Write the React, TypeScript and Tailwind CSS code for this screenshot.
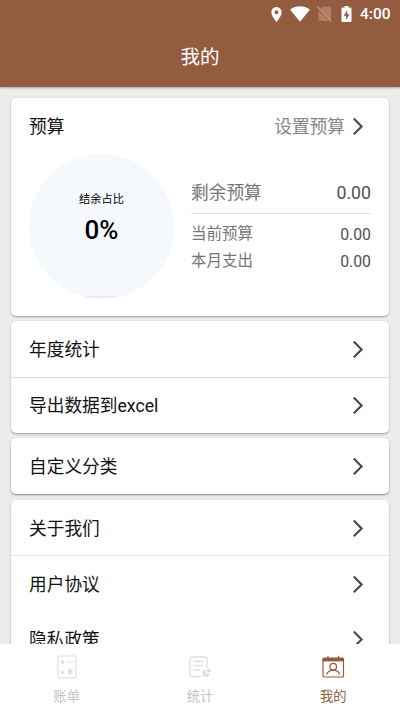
const Chevron = () => {
  return (
    <svg className="w-3 h-[18px] shrink-0" viewBox="0 0 12 18" fill="none">
      <path d="M1.8 1.6L9.6 9.4L1.8 17.2" stroke="#48484a" strokeWidth="2.1" />
    </svg>
  );
};

const Row = ({ label }: { label: string }) => {
  return (
    <div className="h-14 pl-[18px] pr-[25px] flex items-center justify-between cursor-pointer">
      <p className="pt-0.5 text-[17.7px] leading-6 text-[#111]">{label}</p>
      <Chevron />
    </div>
  );
};

const StatusBar = () => {
  return (
    <div className="h-7 pr-[9px] flex items-center justify-end text-white">
      <svg className="w-[11px] h-[15px]" viewBox="0 0 11 15" fill="#fff">
        <path
          fillRule="evenodd"
          d="M5.5 0A5.2 5.2 0 0 0 .3 5.2C.3 9 5.5 15 5.5 15s5.2-6 5.2-9.8A5.2 5.2 0 0 0 5.5 0Zm0 3.3a1.9 1.9 0 1 1 0 3.8a1.9 1.9 0 0 1 0-3.8Z"
        />
      </svg>
      <svg className="w-5 h-4 ml-2" viewBox="0 0 20 16" fill="#fff">
        <path d="M0 3.6C6 -.9 14 -.9 20 3.6L10 15.7Z" />
      </svg>
      <svg className="w-[15px] h-4 ml-[7px]" viewBox="0 0 15 16">
        <path d="M5.5 .8H14V14L3.6 2.8ZM1.5 4L12 15H1.5Z" fill="#b07f68" />
        <path d="M.5 .8L14.3 15.2" stroke="#c09a86" strokeWidth="1.3" />
      </svg>
      <svg className="w-[11px] h-4 ml-[9px]" viewBox="0 0 11 16" fill="#fff">
        <path
          fillRule="evenodd"
          d="M3.5 0h4v1.6H9.6q.9 0 .9.9V15q0 1-.9 1H1.4q-.9 0-.9-1V2.5q0-.9.9-.9H3.5ZM6.2 4L2.6 9.8H5V14L8.5 8.2H6.2Z"
        />
      </svg>
      <p className="ml-2 w-[31px] text-[15.5px] leading-5 font-medium whitespace-nowrap">4:00</p>
    </div>
  );
};

const BillIcon = () => {
  return (
    <svg className="w-6 h-6" viewBox="0 0 24 24" fill="none" stroke="#dedede">
      <rect x="3" y="1" width="18" height="22" rx="1.5" strokeWidth="1.2" />
      <path d="M11.5 7H18M12.8 13.3L15.2 16L17.6 13.3M15.2 16V20M12.8 16.2H17.6M12.8 18.2H17.6" strokeWidth="1.2" />
      <circle cx="7.5" cy="7" r="1.7" fill="#dedede" stroke="none" />
      <circle cx="7.5" cy="17.3" r="1.7" fill="#dedede" stroke="none" />
    </svg>
  );
};

const StatsIcon = () => {
  return (
    <svg className="w-6 h-6" viewBox="0 0 24 24" fill="none" stroke="#dedede" strokeWidth="1.3">
      <path d="M13 21.5H4Q2 21.5 2 19.5V4Q2 2 4 2H17Q19 2 19 4V13" />
      <path d="M5.5 6.5H15.5M5.5 10.7H15.5M5.5 15H11.5" />
      <path d="M17.7 14.7A3.7 3.7 0 1 0 21.6 18.6H17.7Z" fill="#dedede" stroke="none" />
      <path d="M19.2 13.5A3.5 3.5 0 0 1 22.7 17H19.2Z" fill="#dedede" stroke="none" />
    </svg>
  );
};

const MineIcon = () => {
  return (
    <svg className="w-6 h-6" viewBox="0 0 24 24" fill="none" stroke="#935b3f" strokeWidth="1.2">
      <rect x="2" y="3" width="20.5" height="19" rx="1.3" />
      <path d="M1.6 3H23V6.4H1.6Z" fill="#935b3f" stroke="none" />
      <path d="M7 .8V4M17.5 .8V4" />
      <circle cx="12.2" cy="11.7" r="3.3" />
      <path d="M5.6 19.6C7.6 13.7 16.8 13.7 18.8 19.6" />
    </svg>
  );
};

const App = () => {
  return (
    <div className="h-[711px] w-[400px] flex flex-col overflow-hidden bg-[#ececec] font-['Roboto','Noto_Sans_CJK_SC',sans-serif]">
      <div className="h-[87px] shrink-0 bg-[#935b3f] shadow-[0_1px_2px_rgba(0,0,0,0.3)]">
        <StatusBar />
        <h1 className="h-[60px] flex items-center justify-center text-[19.5px] font-normal text-white">
          我的
        </h1>
      </div>

      <div className="flex-1 min-h-0 overflow-hidden px-[11px] pt-[11px] flex flex-col gap-[5px]">
        <div className="h-[218px] shrink-0 bg-white rounded-[5px] shadow-[0_1px_2px_rgba(0,0,0,0.35)] px-[18px]">
          <div className="h-14 pr-[7px] flex items-center">
            <p className="pt-0.5 text-[17.7px] text-[#111]">预算</p>
            <p className="pt-0.5 ml-auto mr-[7px] text-[17.7px] text-[#858585]">设置预算</p>
            <Chevron />
          </div>
          <div className="flex">
            <div className="w-[145px] h-[145px] shrink-0 rounded-full overflow-hidden bg-[#f5f9fe] flex flex-col items-center">
              <p className="mt-[38px] text-[11.2px] leading-4 text-black">结余占比</p>
              <p className="mt-[6px] text-[26px] leading-8 font-medium text-black">0%</p>
              <div className="mt-auto mb-[1px] h-[2px] w-8 bg-[#ececec]" />
            </div>
            <div className="ml-[17px] flex-1">
              <div className="mt-[19px] h-[41px] pt-px border-b border-[#dedede] flex items-center justify-between text-[17.7px]">
                <p className="text-[#757575]">剩余预算</p>
                <p className="text-[#505050]">0.00</p>
              </div>
              <div className="mt-[7px] h-[27px] flex items-center justify-between text-[15.5px]">
                <p className="text-[#757575]">当前预算</p>
                <p className="text-[15.8px] text-[#505050]">0.00</p>
              </div>
              <div className="h-[27px] flex items-center justify-between text-[15.5px]">
                <p className="text-[#757575]">本月支出</p>
                <p className="text-[15.8px] text-[#505050]">0.00</p>
              </div>
            </div>
          </div>
        </div>

        <div className="shrink-0 bg-white rounded-[5px] shadow-[0_1px_2px_rgba(0,0,0,0.35)]">
          <Row label="年度统计" />
          <div className="border-t border-[#d9d9d9]">
            <div className="-mt-px">
              <Row label="导出数据到excel" />
            </div>
          </div>
        </div>

        <div className="shrink-0 bg-white rounded-[5px] shadow-[0_1px_2px_rgba(0,0,0,0.45)]">
          <Row label="自定义分类" />
        </div>

        <div className="mt-px shrink-0 bg-white rounded-[5px] shadow-[0_1px_2px_rgba(0,0,0,0.35)]">
          <Row label="关于我们" />
          <div className="-mt-px border-t border-[#e6e6e6]">
            <Row label="用户协议" />
          </div>
          <div className="-mt-px">
            <Row label="隐私政策" />
          </div>
        </div>
      </div>

      <div className="h-[67px] shrink-0 bg-white grid grid-cols-3 text-[13.3px] leading-5">
        <div className="pt-[11px] flex flex-col items-center gap-2 text-[#c4c4c4]">
          <BillIcon />
          <p>账单</p>
        </div>
        <div className="pt-[11px] flex flex-col items-center gap-2 text-[#c4c4c4]">
          <StatsIcon />
          <p>统计</p>
        </div>
        <div className="pt-[11px] flex flex-col items-center gap-2 text-[#935b3f]">
          <MineIcon />
          <p>我的</p>
        </div>
      </div>
    </div>
  );
};
export default App;
